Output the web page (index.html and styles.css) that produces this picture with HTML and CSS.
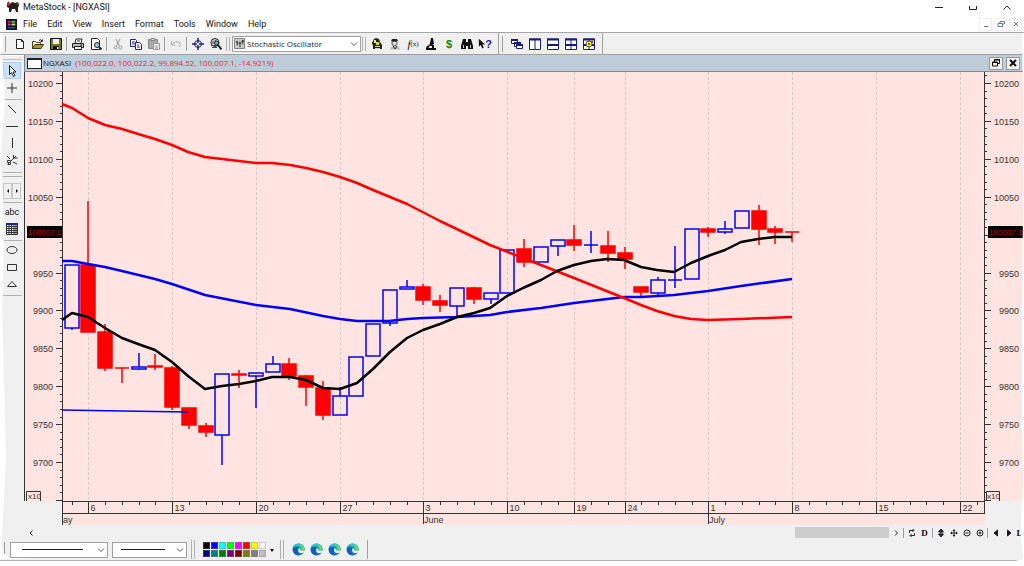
FILE: index.html
```html
<!DOCTYPE html>
<html lang="en">
<head>
    <meta charset="UTF-8">
    <meta name="viewport" content="width=device-width, initial-scale=1.0">
    <title>MetaStock - [NGXASI]</title>
    <link rel="stylesheet" href="styles.css">
</head>
<body>

<header class="titlebar">
    <svg class="logo" viewBox="0 0 14 12"><path d="M1 2l3 1 2-2 3 1 3-1 1 3-1 3 0 4h-2l-1-3H6l-1 3H3L3 7 1 6z" fill="#222"/><path d="M2 0l3 3-3 2-1-2zM11 1l2 2-2 1z" fill="#d22"/></svg>
    <h1>MetaStock - [NGXASI]</h1>
    <div class="window-buttons">
        <button aria-label="Minimize"><svg viewBox="0 0 10 10"><path d="M1 5.500h8"/></svg></button>
        <button aria-label="Maximize"><svg viewBox="0 0 10 10"><path d="M1.500 4v3.500h7V4"/></svg></button>
        <button aria-label="Close"><svg viewBox="0 0 10 10"><path d="M1.500 7.500L5 4l3.500 3.500"/></svg></button>
    </div>
</header>

<nav class="menubar">
    <svg class="logo" viewBox="0 0 12 12"><path d="M0 0h12v12H0z" fill="#113"/><path d="M2 2h3v2H2z" fill="#e22"/><path d="M6 2h4v2H6z" fill="#3c8"/><path d="M2 5h3v2H2z" fill="#e3b"/><path d="M6 5h4v2H6z" fill="#dd3"/><path d="M2 9h8v1H2z" fill="#36e"/></svg>
    <button>File</button>
    <button>Edit</button>
    <button>View</button>
    <button>Insert</button>
    <button>Format</button>
    <button>Tools</button>
    <button>Window</button>
    <button>Help</button>
    <div class="mdi-buttons">
        <button aria-label="Minimize chart"><svg viewBox="0 0 10 10"><path d="M3 7.500h4"/></svg></button>
        <button aria-label="Restore chart"><svg viewBox="0 0 10 10"><path d="M4 4V2.500h4.500V5H7M2 4.500h4.500V7.500H2z"/></svg></button>
        <button aria-label="Close chart"><svg viewBox="0 0 10 10"><path d="M3 3l4 4M7 3L3 7"/></svg></button>
    </div>
</nav>

<div class="toolbar">
    <i class="grip"></i>
    <button aria-label="New"><svg viewBox="0 0 12 12"><path d="M2.500 1.500h5l2 2v7h-7zM7.500 1.500v2h2" fill="#fff" stroke="#222"/></svg></button>
    <button aria-label="Open"><svg viewBox="0 0 12 12"><path d="M.5 10.500v-7h3l1 1h4v2" fill="#ff8" stroke="#443"/><path d="M.5 10.500l2.500-4h8.500l-2.500 4z" fill="#a9a020" stroke="#332"/><path d="M7 2.500q2-2 3 .5M10.500 1.500v2h-2" fill="none" stroke="#222"/></svg></button>
    <button aria-label="Save"><svg viewBox="0 0 12 12"><path d="M.5 .5h11v11h-11z" fill="#777a10" stroke="#111"/><path d="M3 1h6v5H3z" fill="#eee"/><path d="M3 8h6v4H3z" fill="#111"/><path d="M7 9h1.500v2H7z" fill="#fff"/></svg></button>
    <i class="sep"></i>
    <button aria-label="Print"><svg viewBox="0 0 12 12"><path d="M3 5l1-4h6L9 5" fill="#fff" stroke="#222"/><path d="M.5 5.500h11v4h-11z" fill="#bbb" stroke="#222"/><path d="M2.500 8.500h7v3h-7z" fill="#eee" stroke="#222"/><path d="M5 3h3M8 7h2" stroke="#222"/></svg></button>
    <button aria-label="Print preview"><svg viewBox="0 0 12 12"><path d="M1.500 .5h6l2 2v9h-8z" fill="#fff" stroke="#222"/><circle cx="7" cy="7" r="2.500" fill="#9cd" stroke="#222"/><path d="M9 9l2.500 2.500" stroke="#222" stroke-width="2"/></svg></button>
    <i class="sep"></i>
    <button aria-label="Cut" disabled><svg viewBox="0 0 12 12"><path d="M4 1l3.500 7M8 1L4.500 8" stroke="#999" fill="none"/><circle cx="3.500" cy="9.500" r="1.500" fill="none" stroke="#999"/><circle cx="8.500" cy="9.500" r="1.500" fill="none" stroke="#999"/></svg></button>
    <button aria-label="Copy"><svg viewBox="0 0 12 12"><path d="M.5 1.500h5l1 1v6h-6z" fill="#fff" stroke="#228"/><path d="M5.500 4.500h4l2 2v5h-6z" fill="#fff" stroke="#228"/><path d="M2 4h3M2 6h3M7 7h2M7 9h3" stroke="#228"/></svg></button>
    <button aria-label="Paste" disabled><svg viewBox="0 0 12 12"><path d="M.5 1.500h9v9h-9z" fill="#aaa" stroke="#888"/><path d="M3 .5h4v2H3z" fill="#ddd" stroke="#888"/><path d="M5.500 5.500h6v6h-6z" fill="#eee" stroke="#999"/><path d="M7 8h3M7 10h3" stroke="#999"/></svg></button>
    <i class="sep"></i>
    <button aria-label="Undo" disabled><svg viewBox="0 0 12 12"><path d="M1.500 3v4h4M2 6.500q3-4 7-2.500 3 2 0 5" fill="none" stroke="#aaa"/></svg></button>
    <i class="sep"></i>
    <button aria-label="Crosshair"><svg viewBox="0 0 12 12"><circle cx="6" cy="6" r="3.500" fill="none" stroke="#226" /><path d="M6 0v5M6 7v5M0 6h5M7 6h5" stroke="#226" stroke-width="1.500"/></svg></button>
    <button aria-label="Zoom"><svg viewBox="0 0 12 12"><circle cx="5" cy="4.500" r="4" fill="#ddd" stroke="#222"/><path d="M1 7.500h6M2 9.500h5M3 3v3M5 2v4" stroke="#444"/><circle cx="6.500" cy="5" r="2" fill="#6bb" stroke="#222"/><path d="M8 7l3.500 4.500" stroke="#222" stroke-width="2"/></svg></button>
    <i class="sep double"></i>
    <div class="combo indicator">
        <svg viewBox="0 0 12 12"><path d="M.5 .5h11v11h-11z" fill="#ccc" stroke="#777"/><path d="M3.500 3v5M6.500 4v6M9.500 2v5" stroke="#222"/><path d="M2 4.500h2M5 5.500h3M8 3.500h3" stroke="#222"/></svg>
        <select aria-label="Indicator"><option>Stochastic Oscillator</option></select>
        <svg class="chevron" viewBox="0 0 8 8"><path d="M1 2.500l3 3 3-3"/></svg>
    </div>
    <i class="sep double"></i>
    <button aria-label="Expert advisor"><svg viewBox="0 0 12 12"><path d="M3 1l2-1 3 1 1 3 2 3v4H2V8L1 5z" fill="#222"/><path d="M3 2h2v3H3z" fill="#eda"/><path d="M5 4h3v3H5z" fill="#dd2"/><path d="M4 8h5v1H4zM4 10h5v1H4z" fill="#ccc"/></svg></button>
    <button aria-label="Explorer"><svg viewBox="0 0 12 12"><path d="M3 1h5l1 2H2z" fill="#222"/><path d="M3 3.500h5v3l-2 1.500-3-1.500z" fill="#ddd" stroke="#555"/><path d="M1 11.500l1-2.500 3-1h2l3 1 1 2.500z" fill="#bbb"/><path d="M4 8l2 3 2-3" fill="none" stroke="#333"/></svg></button>
    <button aria-label="Indicator builder" class="fx"><em>f</em><small>(x)</small></button>
    <button aria-label="System tester"><svg viewBox="0 0 12 12"><path d="M6 0h2l1 6-2 1-2-2zM5 5l3 3H4zM1 10h10v2H1z" fill="#111"/><path d="M4 8q-2 1-2 3M8 7v4" fill="none" stroke="#111" stroke-width="2"/></svg></button>
    <button aria-label="Option pricing" class="dollar">$</button>
    <button aria-label="Find"><svg viewBox="0 0 12 12"><path d="M2 1h3v3h2V1h3l2 7v3H7V8H5v3H0V8z" fill="#111"/><path d="M2 7h1v3H2zM9 7h1v3H9z" fill="#ccc"/></svg></button>
    <button aria-label="Context help" class="ask"><svg viewBox="0 0 8 12"><path d="M1 0v9l2-2 2 4 1.500-1L5 6.500h3z" fill="#111"/></svg>?</button>
    <i class="sep wide"></i>
    <i class="grip"></i>
    <button aria-label="Cascade"><svg viewBox="0 0 12 12"><g fill="#fff" stroke="#1a1a80"><path d="M.5 1.500h6v4h-6z"/><path d="M3.500 4.500h6v4h-6z"/><path d="M5.500 6.500h6v4h-6z"/><path d="M0 2h7M3 5h7M5 7h7" stroke-width="2"/></g></svg></button>
    <button aria-label="Tile columns"><svg viewBox="0 0 12 12"><path d="M.5 1h11v10.500H.5zM6 1v10" fill="#fff" stroke="#1a1a80"/><path d="M0 1.500h12" stroke="#1a1a80" stroke-width="2"/></svg></button>
    <button aria-label="Tile rows"><svg viewBox="0 0 12 12"><path d="M.5 1h11v10.500H.5z" fill="#fff" stroke="#1a1a80"/><path d="M0 1.500h12M0 7h12" stroke="#1a1a80" stroke-width="2"/></svg></button>
    <button aria-label="Tile grid"><svg viewBox="0 0 12 12"><path d="M.5 1h11v10.500H.5zM6 1v10" fill="#fff" stroke="#1a1a80"/><path d="M0 1.500h12M0 7h12" stroke="#1a1a80" stroke-width="2"/></svg></button>
    <button aria-label="Layout options"><svg viewBox="0 0 12 12"><path d="M.5 1h11v10.500H.5zM6 1v10" fill="#fff" stroke="#1a1a80"/><path d="M0 1.500h12M0 7h12" stroke="#1a1a80" stroke-width="2"/><circle cx="6" cy="6" r="3" fill="#ee2" stroke="#553"/><circle cx="6" cy="6" r="1" fill="#553"/><path d="M8 3h2v2H8z" fill="#d22"/></svg></button>
    <i class="sep wide"></i>
</div>

<main class="workspace">
    <aside class="tools">
        <button class="active" aria-label="Select"><svg viewBox="0 0 12 12"><path d="M3.500 .5v9l2-2 2 4 1.500-1-2-3.500h3z" fill="#fff" stroke="#222"/></svg></button>
        <button aria-label="Crosshair pointer"><svg viewBox="0 0 12 12"><path d="M6 1v10M1 6h10"/></svg></button>
        <hr>
        <button aria-label="Trendline"><svg viewBox="0 0 12 12"><path d="M2 2l8 8"/></svg></button>
        <button aria-label="Horizontal line"><svg viewBox="0 0 12 12"><path d="M0 6.500h12"/></svg></button>
        <button aria-label="Vertical line"><svg viewBox="0 0 12 12"><path d="M6.500 1v10"/></svg></button>
        <button aria-label="Stop and limit"><svg viewBox="0 0 12 12"><path d="M10 2L2 10M7.500 1v3h4M4.500 6.500h-3v2h3v2h-3M1 2l3 3M7 8l4 2"/></svg></button>
        <hr class="grip-line">
        <div class="steppers">
            <button aria-label="Previous tools"><svg viewBox="0 0 6 8"><path d="M4 2v4L2 4z" fill="#111"/></svg></button>
            <button aria-label="Next tools"><svg viewBox="0 0 6 8"><path d="M2 2v4l2-2z" fill="#111"/></svg></button>
        </div>
        <hr>
        <button class="abc">abc</button>
        <button aria-label="Grid"><svg viewBox="0 0 12 12"><path d="M.5 .5h11v11H.5zM3 1v10M5.500 1v10M8 1v10M10 1v10M1 3.500h10M1 5.500h10M1 7.500h10M1 9.500h10" fill="#fff"/><path d="M0 1h12" stroke="#228" stroke-width="2"/></svg></button>
        <hr>
        <button aria-label="Ellipse"><svg viewBox="0 0 12 12"><ellipse cx="6" cy="6" rx="5" ry="3.500"/></svg></button>
        <button aria-label="Rectangle"><svg viewBox="0 0 12 12"><path d="M1.500 3.500h9v6h-9z"/></svg></button>
        <button aria-label="Triangle"><svg viewBox="0 0 12 12"><path d="M6 3.500l4.500 5h-9z"/></svg></button>
        <hr>
    </aside>

    <section class="chart-window">
        <div class="chart-title">
            <span class="chart-icon"></span>
            <b>NGXASI</b>
            <output>(100,022.0, 100,022.2, 99,894.52, 100,007.1, -14.9219)</output>
            <button aria-label="Restore"><svg viewBox="0 0 10 10"><path d="M3.500 4V1.500h5v4H7M1.500 4h5v4h-5zM3 2h6M1 4.500h6"/></svg></button>
            <button aria-label="Close window"><svg viewBox="0 0 10 10"><path d="M2 2l6 6M8 2L2 8" stroke-width="2"/></svg></button>
        </div>
        <svg id="chart" class="chart" viewBox="24 72 1000 454" role="img" aria-label="NGXASI candlestick chart"></svg>
        <div class="scrollrow">
            <button aria-label="Scroll left"><svg viewBox="0 0 10 10"><path d="M6.500 2.500L4 5l2.500 2.500"/></svg></button>
            <span class="track"><span class="thumb"></span></span>
            <button aria-label="Scroll right"><svg viewBox="0 0 10 10"><path d="M4 2.500L6.500 5 4 7.500"/></svg></button>
            <i class="sep"></i>
            <button aria-label="Refresh"><svg viewBox="0 0 10 10"><path d="M2.500 5V2.500h4M5.500 1L7 2.500 5.500 4M7.500 5v2.500h-4M4.500 6L3 7.500 4.500 9"/></svg></button>
            <button class="period">D</button>
            <i class="sep"></i>
            <button aria-label="Rescale"><svg viewBox="0 0 10 10"><path d="M5 1l2.500 3h-5zM5 9l2.500-3h-5zM5 3v4" fill="#222"/></svg></button>
            <button aria-label="Move"><svg viewBox="0 0 10 10"><path d="M5 2v6M2 5h6"/><path d="M5 1l1.500 2h-3zM5 9l1.500-2h-3zM1 5l2-1.500v3zM9 5L7 3.500v3z" fill="#222" stroke="none"/></svg></button>
            <button aria-label="Zoom out"><svg viewBox="0 0 10 10"><circle cx="5" cy="5" r="3"/><path d="M3.500 5h3"/></svg></button>
            <button aria-label="Zoom in"><svg viewBox="0 0 10 10"><circle cx="5" cy="5" r="3"/><path d="M3.500 5h3M5 3.500v3"/></svg></button>
            <i class="sep"></i>
            <button aria-label="Previous security"><svg viewBox="0 0 10 10"><path d="M6.500 2v6L3 5z" fill="#111"/></svg></button>
            <button aria-label="Next security"><svg viewBox="0 0 10 10"><path d="M3.500 2v6L7 5z" fill="#111"/></svg></button>
            <button class="period last">L</button>
        </div>
    </section>
</main>

<footer class="stylebar">
    <i class="grip"></i>
    <div class="combo line-style">
        <select aria-label="Line style"></select>
        <span class="sample"></span>
        <svg class="chevron" viewBox="0 0 8 8"><path d="M1 2.500l3 3 3-3"/></svg>
    </div>
    <div class="combo line-weight">
        <select aria-label="Line weight"></select>
        <span class="sample"></span>
        <svg class="chevron" viewBox="0 0 8 8"><path d="M1 2.500l3 3 3-3"/></svg>
    </div>
    <i class="sep double"></i>
    <div id="palette" class="palette"></div>
    <button class="more" aria-label="More colors"><svg viewBox="0 0 8 8"><path d="M2 3h4L4 6z" fill="#111"/></svg></button>
    <i class="sep double"></i>
    <div id="links" class="links"></div>
    <i class="sep"></i>
</footer>

<svg class="edges" viewBox="0 0 1024 566" preserveAspectRatio="none">
    <path d="M0 33h3v16l-3 4 2 10 2 20 1 20-3 30-1 35 2 30 1 50-2 60 2 70 2 80-2 40-2 35-1 8 2 12 7 5 30 1H0z"/>
    <path d="M1024 33h-2l1 60v110l-1 120v90l1 70-1 22-1 15v15l2 24-12 3h-74l-2 3-75 1H0v3h1024z"/>
</svg>

<script src="chart.js"></script>
</body>
</html>
```

FILE: styles.css
```css
* {
    margin: 0;
    padding: 0;
    box-sizing: border-box;
}

body {
    background: #fff;
    color: #111;
    font: 9px/12px Roboto, "Open Sans", sans-serif;
    overflow: hidden;
}

button {
    display: flex;
    align-items: center;
    justify-content: center;
    border: none;
    background: none;
    color: inherit;
    font: inherit;
}

button svg {
    display: block;
}

/* title and menu */
.titlebar {
    display: flex;
    align-items: center;
    height: 13px;
    padding-left: 6px;
    gap: 3px;
}

.titlebar h1 {
    font-size: 9px;
    font-weight: 400;
}

.titlebar .logo {
    width: 14px;
    height: 12px;
}

.window-buttons,
.mdi-buttons {
    display: flex;
    margin-left: auto;
}

.window-buttons button {
    width: 34px;
}

.window-buttons svg {
    width: 10px;
    height: 10px;
    fill: none;
    stroke: #222;
}

.menubar {
    display: flex;
    align-items: center;
    height: 19px;
    padding: 3px 2px 0 6px;
}

.menubar > button {
    padding: 0 5px;
}

.menubar .logo {
    width: 11px;
    height: 11px;
    margin-right: 1px;
}

.mdi-buttons {
    gap: 2px;
}

.mdi-buttons button {
    width: 13px;
    height: 13px;
    border: 1px solid #eee;
}

.mdi-buttons svg {
    width: 10px;
    height: 10px;
    fill: none;
    stroke: #678;
}

/* toolbars */
.toolbar {
    display: flex;
    align-items: center;
    height: 22px;
    padding-left: 4px;
    background: #f0f0f0;
    border-top: 1px solid #a8a8a8;
}

.toolbar button {
    width: 18px;
    height: 18px;
    flex: none;
}

.toolbar button svg {
    width: 12px;
    height: 12px;
}

.sep {
    width: 1px;
    height: 14px;
    margin: 0 2px 0 1px;
    background: #a0a0a0;
    flex: none;
}

.sep.double {
    width: 4px;
    margin: 0 2px 0 1px;
    background: none;
    border: solid #b0b0b0;
    border-width: 0 1px;
}

.sep.wide {
    height: 21px;
    margin: 0 2px 0 4px;
}

.grip {
    width: 2px;
    height: 16px;
    margin-right: 5px;
    border-right: 1px solid #a0a0a0;
    flex: none;
}

.toolbar .fx {
    font: 11px/12px "Liberation Serif", serif;
}

.fx small {
    font-size: 7px;
}

.toolbar .dollar {
    color: #0a8a1a;
    font: bold 11px/12px "Liberation Sans", sans-serif;
}

.toolbar .ask {
    color: #1a1a90;
    font: bold 11px/12px "Liberation Sans", sans-serif;
}

.toolbar .ask svg {
    width: 7px;
}

.combo {
    position: relative;
    display: flex;
    align-items: center;
    height: 16px;
    background: #fff;
    border: 1px solid #a0a0a0;
    flex: none;
}

.combo svg {
    width: 11px;
    height: 11px;
    margin-left: 1px;
}

.combo select {
    flex: 1;
    min-width: 0;
    height: 14px;
    padding-left: 2px;
    border: none;
    background: none;
    color: #222;
    font: 8px/12px "Open Sans", sans-serif;
    appearance: none;
}

.combo .chevron {
    position: absolute;
    right: 2px;
    width: 8px;
    height: 8px;
    fill: none;
    stroke: #555;
    pointer-events: none;
}

.indicator {
    width: 129px;
}

/* workspace */
.workspace {
    display: flex;
    background: #f0f0f0;
    border-top: 1px solid #a0a0a0;
}

.tools {
    width: 24px;
    padding: 3px 2px 0 3px;
    flex: none;
    border-top: 1px solid #fff;
}

.tools::before {
    content: "";
    display: block;
    height: 1px;
    margin-bottom: 2px;
    background: #bbb;
}

.tools button {
    width: 18px;
    height: 17px;
}

.tools .active {
    background: #c9e2f7;
    border: 1px solid #a9d0f0;
}

.tools svg {
    width: 12px;
    height: 12px;
    fill: none;
    stroke: #333;
}

.tools hr {
    height: 4px;
    border: none;
    border-bottom: 1px solid #b0b0b0;
}

.tools .grip-line {
    height: 5px;
    margin: 4px 0 6px;
    border-top: 1px solid #b0b0b0;
}

.steppers {
    display: flex;
}

.steppers button {
    width: 9px;
    height: 16px;
    border: 1px solid #c8c8c8;
}

.steppers svg {
    width: 6px;
    height: 8px;
    stroke: none;
}

.tools .abc {
    font-size: 9px;
}

.chart-window {
    flex: 1;
    min-width: 0;
}

.chart-title {
    display: flex;
    align-items: center;
    height: 17px;
    padding: 0 4px 0 2px;
    background: #bfccda;
    border: 1px solid #888;
    border-width: 0 0 1px 1px;
    font: 8px/12px "Open Sans", sans-serif;
}

.chart-icon {
    width: 15px;
    height: 11px;
    margin-right: 1px;
    background: #fff;
    border: 1px solid #222;
    border-top-width: 2px;
}

.chart-title b {
    font-weight: 400;
    margin-right: 4px;
}

.chart-title output {
    flex: 1;
    color: #f0203a;
}

.chart-title button {
    width: 14px;
    height: 13px;
    margin-left: 3px;
    background: #f0f0f0;
    border: 1px solid #999;
}

.chart-title svg {
    width: 10px;
    height: 10px;
    fill: none;
    stroke: #111;
}

.chart {
    display: block;
    width: 100%;
    height: auto;
}

.chart .paper { fill: #ffe4e1; }
.chart .axis { stroke: #333; fill: none; }
.chart .grid { stroke: #d2c8c5; stroke-dasharray: 3 2; }
.chart .up { fill: none; stroke: #00f; stroke-width: 1.500; }
.chart .down { fill: #f00; stroke: #f00; stroke-width: 1.500; }
.chart .line { fill: none; stroke-width: 2.500; stroke-linejoin: round; }
.chart text { font: 9px "Liberation Sans", Arial, sans-serif; fill: #333; }
.chart .scale { font-size: 8px; }
.chart .price { font-size: 8px; fill: #d00000; }

.scrollrow {
    display: flex;
    align-items: center;
    height: 13px;
}

.scrollrow button {
    width: 13px;
    height: 12px;
    flex: none;
}

.scrollrow svg {
    width: 10px;
    height: 10px;
    fill: none;
    stroke: #222;
}

.scrollrow .sep {
    height: 10px;
    margin: 0 1px;
}

.scrollrow .period {
    font: bold 9px/12px "Liberation Serif", serif;
}

.scrollrow .last {
    width: 9px;
}

.track {
    display: flex;
    justify-content: flex-end;
    flex: 1;
}

.thumb {
    width: 11%;
    height: 11px;
    background: #cdcdcd;
}

/* line style bar */
.stylebar {
    display: flex;
    align-items: center;
    height: 22px;
    padding-left: 3px;
    background: #f0f0f0;
    border-bottom: 1px solid #b0b0b0;
}

.line-style {
    width: 98px;
    margin-right: 4px;
}

.line-weight {
    width: 75px;
    margin-right: 3px;
}

.sample {
    position: absolute;
    left: 11px;
    right: 24px;
    height: 1px;
    background: #222;
    pointer-events: none;
}

.line-weight .sample {
    left: 8px;
    right: 21px;
}

.stylebar .sep {
    height: 19px;
}

.palette {
    display: grid;
    grid-template-columns: repeat(8, 7px);
    gap: 1px;
    margin-left: 6px;
}

.palette button {
    height: 7px;
    border: 1px solid rgba(128, 128, 128, 0.4);
}

.more {
    width: 12px;
    margin-right: 1px;
}

.more svg {
    width: 8px;
    height: 8px;
}

.links {
    display: flex;
    gap: 5px;
    margin: 0 7px 0 6px;
}

.links svg {
    width: 13px;
    height: 13px;
}

/* torn border round the window */
.edges {
    position: absolute;
    inset: 0;
    width: 100%;
    height: 100%;
    fill: #fff;
    pointer-events: none;
}
```

FILE: chart.js
```js
const STEP = 16.76;
const FIRST = 71.5;
const xOf = i => FIRST + i * STEP;

// direction, body top, body bottom, wick top, wick bottom
const candles = [
    ['up', 265, 328, 265, 330], ['down', 265, 332, 201, 332], ['down', 332, 368, 324, 371],
    ['down', 368, 368, 368, 383], ['up', 367, 369, 353, 370], ['down', 366, 367, 354, 370],
    ['down', 368, 407, 366, 410], ['down', 408, 425, 408, 429], ['down', 426, 432, 423, 437],
    ['up', 374, 435, 374, 465], ['down', 374, 375, 370, 388], ['up', 373, 376, 373, 408],
    ['up', 364, 372, 356, 372], ['down', 364, 376, 358, 380], ['down', 376, 387, 375, 406],
    ['down', 388, 415, 381, 420], ['up', 396, 415, 387, 415], ['up', 357, 396, 357, 396],
    ['up', 324, 356, 324, 356], ['up', 290, 323, 290, 326], ['up', 287, 289, 280, 289],
    ['down', 287, 300, 284, 305], ['down', 301, 305, 295, 312], ['up', 288, 306, 288, 317],
    ['down', 288, 299, 287, 304], ['up', 293, 299, 293, 304], ['up', 250, 293, 250, 293],
    ['down', 249, 262, 239, 267], ['up', 247, 262, 247, 262], ['up', 240, 246, 240, 256],
    ['down', 240, 245, 225, 251], ['up', 245, 245, 231, 253], ['down', 246, 253, 231, 262],
    ['down', 253, 259, 247, 269], ['down', 287, 292, 287, 297], ['up', 280, 293, 277, 295],
    ['up', 280, 280, 246, 288], ['up', 229, 279, 229, 279], ['down', 229, 232, 227, 237],
    ['up', 229, 232, 221, 234], ['up', 211, 228, 211, 228], ['down', 211, 229, 205, 245],
    ['down', 229, 232, 226, 244], ['down', 232, 232, 232, 242]
];

const averages = [
    ['#00f', '62,261 72,261 88,264 105,267 122,271 155,279 172,284 205,295 256,305 290,309 323,316 340,319 357,321 389,321 407,319 423,318 457,317 490,315 507,312 541,308 574,303 624,297 641,297 674,295 708,291 741,286 792,279'],
    ['#f00', '62,104 72,108 88,118 105,125 122,129 138,134 155,139 172,145 188,152 205,157 222,159 239,161 256,163 272,163 290,165 306,168 323,172 340,177 357,183 373,190 407,204 440,221 490,245 523,258 574,278 624,298 641,305 657,311 674,316 691,319 708,320 741,319 792,317'],
    ['#000', '62,320 72,313 88,317 105,328 122,338 138,344 155,350 172,362 188,376 205,389 222,386 239,384 256,381 272,377 290,377 306,380 323,388 340,389 357,383 373,369 390,352 407,338 423,330 440,324 457,317 474,313 490,308 507,296 523,288 541,280 557,271 574,265 591,261 607,259 624,260 641,267 657,270 674,272 691,263 708,256 725,250 741,242 758,239 775,237 792,237']
];

const weeks = { 1: '6', 6: '13', 11: '20', 16: '27', 21: '3', 26: '10', 30: '19', 33: '24', 38: '1', 43: '8', 48: '15', 53: '22' };
const out = [];
const line = (cls, d) => out.push(`<path class="${cls}" d="${d}"/>`);
const text = (x, y, s, cls = '') => out.push(`<text class="${cls}" x="${x}" y="${y}">${s}</text>`);

out.push('<path class="paper" d="M25 72h999v429H985v24H62v-24H25z"/>');

// date axis
for (let i = 0; i <= 54; i++) {
    const x = Math.round(xOf(i)) + 0.5;
    if (weeks[i]) {
        line('grid', `M${x} 72V501`);
        line('axis', `M${x} 501v12`);
        text(x + 2, 511, weeks[i]);
    } else {
        line('axis', `M${x} 501v4`);
    }
}
line('axis', 'M62.5 72V525M984.500 72V513M62 501.500H985M62 513.500H985M423.500 513v11M708.500 513v11M24.500 72V501');
text(63, 523, 'ay');
text(424, 523, 'June');
text(709, 523, 'July');

// price axes
for (let k = -1; k <= 55; k++) {
    const y = Math.round(83 + k * 7.58) + 0.5;
    const len = k % 5 === 0 ? 6 : 2;
    line('axis', `M${62 - len} ${y}h${len}M985 ${y}h${len}`);
    if (k % 5 === 0 && k !== 20 && k <= 50) {
        const label = String(10200 - k * 10);
        out.push(`<text x="53" y="${y + 3}" text-anchor="end">${label}</text>`);
        out.push(`<text x="1019" y="${y + 3}" text-anchor="end">${label}</text>`);
    }
}
line('axis', 'M26.500 501V491.500H40.500V501M986.500 501V491.500H999.500V501');
text(28, 499, 'x10', 'scale');
text(987, 499, 'x10', 'scale');
out.push('<path d="M27 226h35v12H27zM988 226h36v12h-36z"/>');
text(28, 235, '100007.1', 'price');
text(989, 235, '100007.1', 'price');

candles.forEach(([dir, top, bottom, high, low], i) => {
    const x = Math.round(xOf(i));
    line(dir, `M${x} ${high}V${top}M${x} ${bottom}V${low}M${x - 7} ${top}h14V${bottom}h-14z`);
});
line('up', 'M62 410L122 411 188 412');
averages.forEach(([color, points]) => {
    out.push(`<polyline class="line" stroke="${color}" points="${points}"/>`);
});

document.getElementById('chart').innerHTML = out.join('');

const colors = ['#000', '#00f', '#0ff', '#0f0', '#f0f', '#f00', '#ff0', '#fff', '#000080', '#008080', '#008000', '#800080', '#800000', '#808000', '#808080', '#c0c0c0'];
document.getElementById('palette').innerHTML = colors
    .map(c => `<button aria-label="${c}" style="background: ${c}"></button>`).join('');

const swirl = `<svg viewBox="0 0 14 14">
    <circle cx="7" cy="7" r="6.500" fill="#1479cf"/>
    <path d="M1 5Q3 0 8 .5q6 1 5.500 7-1 2.500-4 2.500Q11 4 6 3.500 3 3.500 1 5z" fill="#38c6b8"/>
    <path d="M9 1q5 2 4.500 6.500-1 2.500-4 2Q11 5 9 1z" fill="#62d860"/>
    <path d="M1 6q3-3 6 0-3 4 1 7-7 1-7-7z" fill="#1060b8"/>
    <path d="M7.500 5.500q-2 3 .5 5 2.500 1 5-.5l1-1-1-1q-3 1.500-4-.5 1-1-1.500-2z" fill="#f0f0f0"/>
</svg>`;
document.getElementById('links').innerHTML = [1, 2, 3, 4]
    .map(n => `<button aria-label="Link ${n}">${swirl}</button>`).join('');
```
